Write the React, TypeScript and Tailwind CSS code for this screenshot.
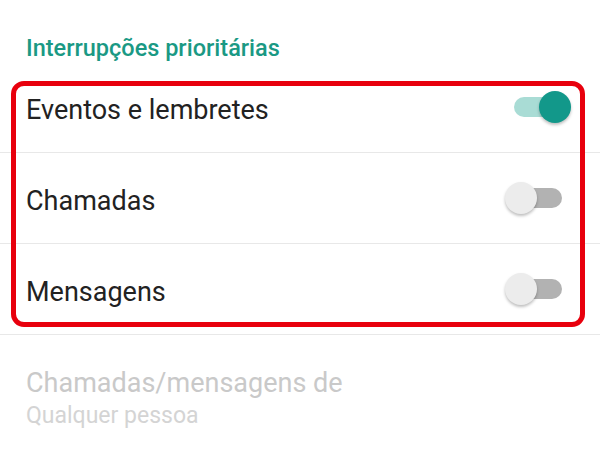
import React, { useState } from 'react';

type SwitchProps = { on: boolean; onToggle: () => void };

const Switch = ({ on, onToggle }: SwitchProps) => {
  return (
    <button
      type="button"
      onClick={onToggle}
      className="relative w-[48px] h-[20px] shrink-0"
      aria-pressed={on}
    >
      {/* track */}
      <span
        className={`absolute inset-0 rounded-full ${on ? 'bg-[#a9dcd5]' : 'bg-[#b2b2b2]'}`}
      />
      {/* thumb */}
      <span
        className={`absolute top-1/2 -translate-y-1/2 w-[32px] h-[32px] rounded-full shadow-[0_2px_3px_rgba(0,0,0,0.25)] ${
          on ? 'left-[25px] bg-[#12988a]' : 'left-[-9px] bg-[#ececec]'
        }`}
      />
    </button>
  );
};

const rows = ['Eventos e lembretes', 'Chamadas', 'Mensagens'];

const App = () => {
  const [state, setState] = useState<boolean[]>([true, false, false]);

  return (
    <div
      className="w-[600px] h-[450px] bg-white overflow-hidden"
      style={{ fontFamily: 'Roboto, "Noto Sans", sans-serif' }}
    >
      {/* Section title */}
      <div className="h-[62px] pt-[35px] px-[26px]">
        <h2 className="text-[23.5px] leading-[26px] font-medium text-[#1a9984]">
          Interrupções prioritárias
        </h2>
      </div>

      {/* Toggle rows */}
      <div className="relative">
        {rows.map((label, i) => (
          <div
            key={label}
            className="h-[91px] flex items-center justify-between pl-[26px] pr-[38px] border-b border-[#e8e8e8]"
          >
            <span className="text-[27px] text-[#222222] pt-[7px]">{label}</span>
            <Switch
              on={state[i]}
              onToggle={() => setState((s) => s.map((v, j) => (j === i ? !v : v)))}
            />
          </div>
        ))}

        {/* highlight frame */}
        <div className="absolute left-[11px] top-[19px] w-[574px] h-[246px] border-[5px] border-[#e8000d] rounded-[13px] pointer-events-none" />
      </div>

      {/* Disabled setting */}
      <div className="px-[26px] pt-[32px]">
        <div className="text-[27px] leading-[32px] text-[#c9c9c9]">Chamadas/mensagens de</div>
        <div className="text-[23px] leading-[28px] text-[#d4d4d4] mt-[3px]">Qualquer pessoa</div>
      </div>
    </div>
  );
};

export default App;
